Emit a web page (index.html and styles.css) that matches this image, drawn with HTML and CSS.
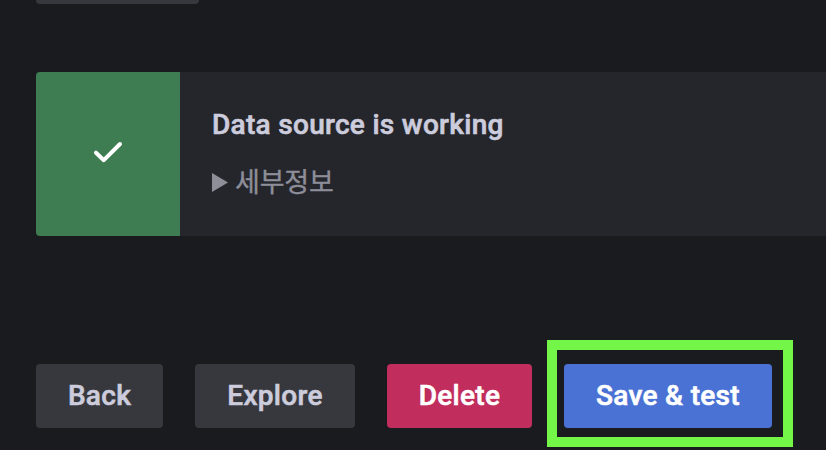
FILE: index.html
```html
<!DOCTYPE html>
<html lang="ko">
<head>
<meta charset="utf-8">
<title>Data source</title>
<link rel="stylesheet" href="styles.css">
</head>
<body>
<main class="page">
  <div class="field-edge"></div>
  <section class="alert">
    <div class="alert-icon">
      <svg width="32" height="24" viewBox="0 0 32 24"><path d="M4 12.7 L11.8 20.2 L28 4" fill="none" stroke="#fff" stroke-width="4" stroke-linecap="round" stroke-linejoin="round"/></svg>
    </div>
    <div class="alert-body">
      <div class="alert-title">Data source is working</div>
      <div class="details"><svg class="marker" width="16" height="19" viewBox="0 0 16 19"><path d="M0 0 L16 9.5 L0 19 Z" fill="currentColor"/></svg><span class="details-label">세부정보</span></div>
    </div>
  </section>
  <div class="actions">
    <button class="btn back">Back</button>
    <button class="btn explore">Explore</button>
    <button class="btn delete">Delete</button>
    <div class="highlight"><button class="btn save">Save &amp; test</button></div>
  </div>
</main>
</body>
</html>
```
FILE: styles.css
```css
* { box-sizing: border-box; }
body { margin: 0; background: #1a1b1f; font-family: Roboto, "Noto Sans CJK KR", sans-serif; overflow: hidden; }
.page { height: 450px; padding-left: 36px; overflow: hidden; }
.field-edge { width: 163px; height: 4px; background: #37383e; border-radius: 0 0 4px 4px; }
.alert { display: flex; height: 164px; margin-top: 68px; background: #25262c; border-radius: 4px 0 0 4px; overflow: hidden; }
.alert-icon { display: flex; align-items: center; justify-content: center; width: 144px; padding-bottom: 4px; background: #3d7d51; }
.alert-body { padding: 35px 32px; }
.alert-title { font-size: 28px; line-height: 36px; font-weight: 500; color: #ccccdc; letter-spacing: 0.3px; white-space: nowrap; -webkit-text-stroke: 0.6px currentColor; }
.details { display: flex; align-items: center; gap: 7px; margin-top: 20px; height: 40px; font-size: 27px; color: #8e8e99; }
.marker { margin-bottom: 2px; }
.details-label { margin-bottom: 5px; letter-spacing: -0.2px; -webkit-text-stroke: 0.35px currentColor; }
.actions { display: flex; align-items: flex-start; height: 107px; margin-top: 104px; }
.btn { height: 64px; margin: 24px 32px 0 0; padding: 0 0 2px; border: 0; border-radius: 4px; background: #37383e; color: #ccccdc; font-family: inherit; font-size: 28px; font-weight: 500; letter-spacing: 0.3px; white-space: nowrap; -webkit-text-stroke: 0.6px currentColor; }
.back { width: 127px; }
.explore { width: 160px; }
.delete { width: 145px; margin-right: 15px; background: #c12d5c; color: #fff; }
.highlight { width: 246px; height: 107px; border: 10px solid #73f648; padding: 14px 0 0 7px; }
.save { width: 208px; margin: 0; background: #4a72d4; color: #fff; }
```
